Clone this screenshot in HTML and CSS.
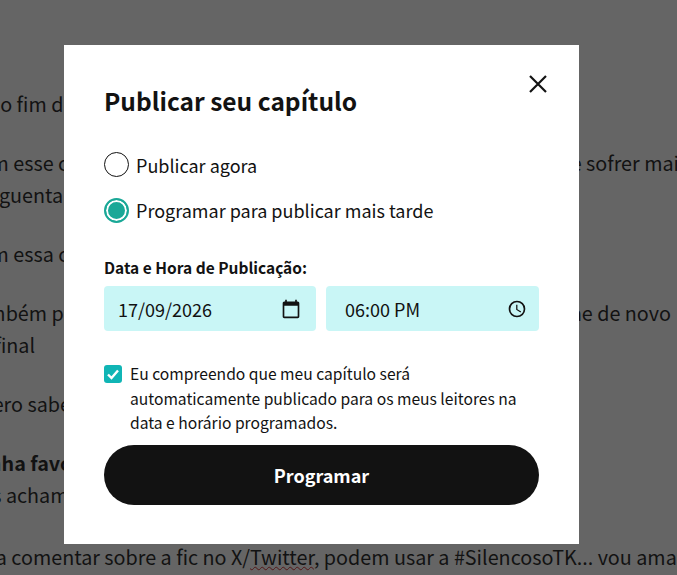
FILE: index.html
```html
<!DOCTYPE html>
<html lang="pt">
<head>
<meta charset="utf-8">
<title>Publicar seu capítulo</title>
<link rel="stylesheet" href="styles.css">
</head>
<body>
<main class="article">
  <p class="para">Até o fim desta história ainda temos muito para ver</p>
  <p class="para">Com esse capítulo eu queria mostrar para vocês como tudo muda e sofrer mais um pouquinho de novo<br>Ai aguentar mais um pouco</p>
  <p class="para">Com essa cena eu termino</p>
  <p class="para">Também perceberam que tudo mudou aqui quando a gente vê o Tae de novo<br>no final</p>
  <p class="para">Quero saber de vocês</p>
  <p class="para"><strong>Minha favorita</strong><br>Nós achamos que sim</p>
  <p class="para last">Para comentar sobre a fic no X/<span class="spell">Twitter</span>, podem usar a #SilencosoTK... vou amar<br>ler tudo o que pensam <svg class="heart" viewBox="0 0 20 18" width="20" height="18"><path d="M10 16.500C4 12 1.500 9 1.500 6A4.300 4.300 0 0 1 10 4.500 4.300 4.300 0 0 1 18.500 6C18.500 9 16 12 10 16.500Z" fill="none" stroke="#121212" stroke-width="1.500"/></svg></p>
</main>
<div class="overlay">
  <section class="modal">
    <button class="close" type="button" aria-label="Fechar">
      <svg viewBox="0 0 20 20" width="20" height="20"><path d="M2 2 18 18M18 2 2 18" fill="none" stroke="#121212" stroke-width="2.200"/></svg>
    </button>
    <h2 class="title">Publicar seu capítulo</h2>
    <div class="options">
      <label class="option"><span class="radio"></span>Publicar agora</label>
      <label class="option"><span class="radio checked"></span>Programar para publicar mais tarde</label>
    </div>
    <div class="field-label">Data e Hora de Publicação:</div>
    <div class="fields">
      <div class="field date">
        <span class="value">17/09/2026</span>
        <svg class="icon" viewBox="0 0 24 24" width="20" height="20"><path d="M20 3h-1V1h-2v2H7V1H5v2H4c-1.100 0-2 .9-2 2v16c0 1.100.9 2 2 2h16c1.100 0 2-.9 2-2V5c0-1.100-.9-2-2-2zm0 18H4V8h16v13z" fill="#121212"/></svg>
      </div>
      <div class="field time">
        <span class="value">06:00 PM</span>
        <svg class="icon" viewBox="0 0 24 24" width="20" height="20"><path d="M12 2a10 10 0 1 0 0 20 10 10 0 0 0 0-20zm0 18a8 8 0 1 1 0-16 8 8 0 0 1 0 16zm.5-13H11v6l5.200 3.100.8-1.200-4.500-2.700V7z" fill="#121212"/></svg>
      </div>
    </div>
    <label class="consent">
      <span class="check"><svg viewBox="0 0 18 18" width="18" height="18"><path d="M4 9.500 7.500 13 14 5.500" fill="none" stroke="#fff" stroke-width="2.400"/></svg></span>
      <span>Eu compreendo que meu capítulo será automaticamente publicado para os meus leitores na data e horário programados.</span>
    </label>
    <button class="submit" type="button">Programar</button>
  </section>
</div>
</body>
</html>
```

FILE: styles.css
```css
* { box-sizing: border-box; }
html, body { margin: 0; height: 100%; overflow: hidden; }
body {
  font-family: "Noto Sans CJK JP", "Noto Sans", sans-serif;
  color: #121212;
  background: #fff;
}
.article {
  margin-left: -34px;
  padding-top: 88px;
  font-size: 19.750px;
  line-height: 32px;
  white-space: nowrap;
}
.para { margin: 27px 0 0; }
.para:first-child { margin-top: 0; }
.para.last { margin-top: 30px; }
.spell { text-decoration: underline wavy #d02020 1px; }
.heart { vertical-align: -2px; }
.overlay {
  position: fixed;
  inset: 0;
  background: rgba(18, 18, 18, 0.65);
}
.modal {
  position: absolute;
  left: 64px;
  top: 45px;
  width: 515px;
  height: 499px;
  padding: 38px 40px 0;
  background: #fff;
}
.close {
  position: absolute;
  top: 29px;
  right: 31px;
  width: 20px;
  height: 20px;
  padding: 0;
  border: 0;
  background: none;
}
.close svg { display: block; }
.title {
  margin: 0;
  font-size: 24.500px;
  line-height: 36px;
  font-weight: 700;
}
.options {
  display: flex;
  flex-direction: column;
  gap: 20px;
  margin-top: 33px;
}
.option {
  display: flex;
  align-items: center;
  gap: 7px;
  height: 25.500px;
  font-size: 18px;
  line-height: 26px;
}
.radio {
  width: 25px;
  height: 25px;
  border: 1px solid #121212;
  border-radius: 50%;
  background: #fff;
}
.radio.checked {
  border: 2px solid #1aa897;
  background: #1aa897;
  box-shadow: inset 0 0 0 2px #fff;
}
.field-label {
  margin-top: 32px;
  font-size: 15.500px;
  line-height: 24px;
  font-weight: 700;
}
.fields {
  display: flex;
  gap: 10px;
  margin-top: 7px;
}
.field {
  display: flex;
  align-items: center;
  justify-content: space-between;
  height: 45px;
  border-radius: 4px;
  background: #c9f6f6;
  font-size: 18px;
}
.date { width: 212px; padding: 0 15px 0 14px; }
.time { flex: 1; padding: 0 12px 0 19px; }
.value { line-height: 24px; }
.icon { display: block; }
.consent {
  display: flex;
  gap: 8px;
  margin-top: 31px;
  font-size: 15.640px;
  line-height: 24.500px;
}
.check {
  flex: none;
  width: 18px;
  height: 18px;
  margin-top: 3px;
  border-radius: 3px;
  background: #10b5b5;
}
.check svg { display: block; }
.submit {
  display: block;
  width: 100%;
  height: 60px;
  margin-top: 9.500px;
  border: 0;
  border-radius: 30px;
  background: #121212;
  color: #fff;
  font: 700 18px/24px "Noto Sans CJK JP", sans-serif;
}
```
